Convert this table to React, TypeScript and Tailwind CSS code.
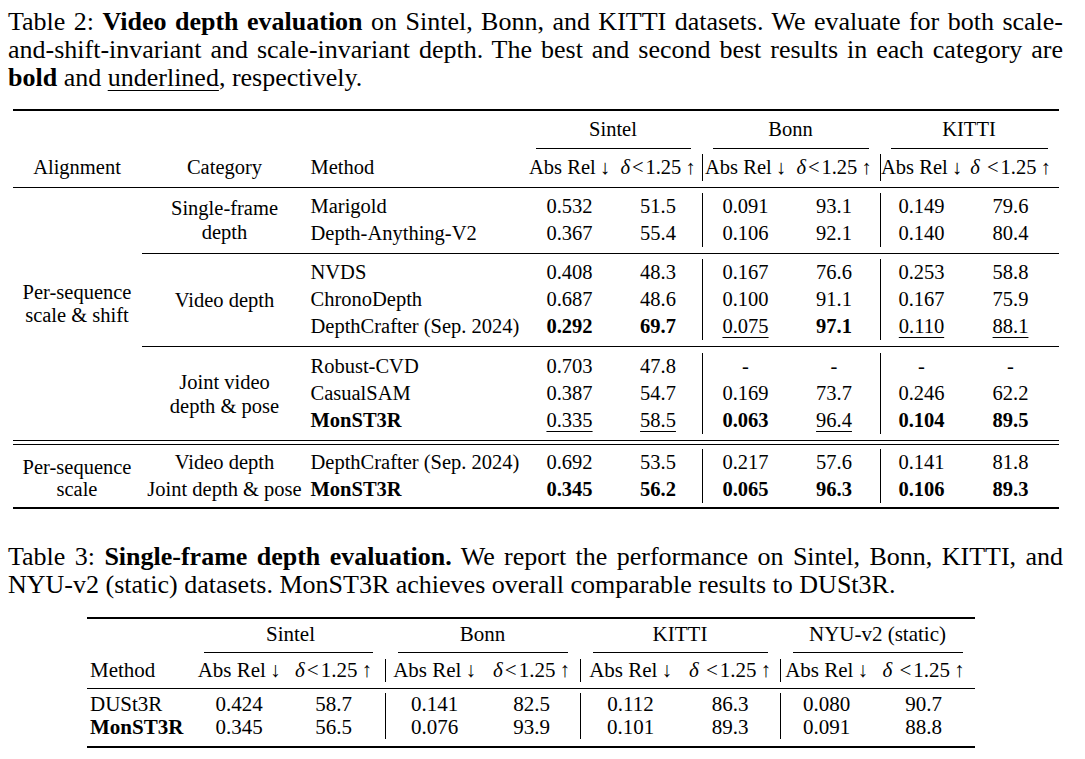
import React from "react";

const t2Rows = [
  { cat: "Single-frame|depth", span: 2, m: "Marigold", v: ["0.532", "51.5", "0.091", "93.1", "0.149", "79.6"] },
  { m: "Depth-Anything-V2", v: ["0.367", "55.4", "0.106", "92.1", "0.140", "80.4"] },
  { rule: true },
  { cat: "Video depth", span: 3, m: "NVDS", v: ["0.408", "48.3", "0.167", "76.6", "0.253", "58.8"] },
  { m: "ChronoDepth", v: ["0.687", "48.6", "0.100", "91.1", "0.167", "75.9"] },
  { m: "DepthCrafter (Sep. 2024)", v: ["*0.292", "*69.7", "_0.075", "*97.1", "_0.110", "_88.1"] },
  { rule: true },
  { cat: "Joint video|depth & pose", span: 3, m: "Robust-CVD", v: ["0.703", "47.8", "-", "-", "-", "-"] },
  { m: "CasualSAM", v: ["0.387", "54.7", "0.169", "73.7", "0.246", "62.2"] },
  { m: "*MonST3R", v: ["_0.335", "_58.5", "*0.063", "_96.4", "*0.104", "*89.5"] },
];

const t3Rows = [
  { m: "DUSt3R", v: ["0.424", "58.7", "0.141", "82.5", "0.112", "86.3", "0.080", "90.7"] },
  { m: "*MonST3R", v: ["0.345", "56.5", "0.076", "93.9", "0.101", "89.3", "0.091", "88.8"] },
];

// "*" = bold, "_" = underlined
function Txt({ s }: { s: string }) {
  if (s.startsWith("*")) return <b className="font-bold">{s.slice(1)}</b>;
  if (s.startsWith("_"))
    return <span className="underline decoration-1 underline-offset-[4px]">{s.slice(1)}</span>;
  return <>{s}</>;
}

function AbsRel() {
  return (
    <>
      Abs Rel<span className="ml-[4px]">↓</span>
    </>
  );
}

function Delta({ gap }: { gap?: boolean }) {
  return (
    <>
      <i className="italic">δ</i>
      {gap ? " " : ""}
      <span className="mx-[2px]">&lt;</span>1.25<span className="ml-[4px]">↑</span>
    </>
  );
}

function Line({ pt, pb, double, thick }: { pt: number; pb: number; double?: boolean; thick?: boolean }) {
  return (
    <div style={{ paddingTop: pt, paddingBottom: pb }}>
      {double ? (
        <div className="h-[5px] border-y border-black" />
      ) : (
        <div className={thick ? "h-[2px] bg-black" : "h-px bg-black"} />
      )}
    </div>
  );
}

function RuleRow(props: { span: number; pt: number; pb: number; double?: boolean; thick?: boolean }) {
  const { span, ...rest } = props;
  return (
    <tr>
      <td colSpan={span} className="p-0">
        <Line {...rest} />
      </td>
    </tr>
  );
}

function Table2() {
  const groups = ["Sintel", "Bonn", "KITTI"];
  return (
    <table className="mx-auto mt-[17px] w-[1046px] table-fixed border-separate border-spacing-0 text-[20.5px] leading-[27px]">
      <colgroup>
        <col className="w-[129px]" />
        <col className="w-[166px]" />
        <col className="w-[217px]" />
        <col className="w-[90px]" />
        <col className="w-[87px]" />
        <col className="w-[87px]" />
        <col className="w-[91px]" />
        <col className="w-[83px]" />
        <col className="w-[96px]" />
      </colgroup>
      <tbody>
        <RuleRow span={9} pt={0} pb={5} thick />
        <tr className="h-[27px]">
          <td colSpan={3} />
          {groups.map((g) => (
            <td key={g} colSpan={2} className="p-0 text-center whitespace-nowrap">
              {g}
            </td>
          ))}
        </tr>
        <tr>
          <td colSpan={3} />
          {groups.map((g) => (
            <td key={g} colSpan={2} className="p-0">
              <div className="mx-[11px] pt-[5px] pb-[5px]">
                <div className="h-px bg-black" />
              </div>
            </td>
          ))}
        </tr>
        <tr className="h-[27px] whitespace-nowrap">
          <td className="p-0 text-center">Alignment</td>
          <td className="p-0 text-center">Category</td>
          <td className="p-0 pl-[3px] text-left">Method</td>
          <td className="p-0 text-center"><AbsRel /></td>
          <td className="p-0 text-center"><Delta /></td>
          <td className="border-l border-black p-0 text-center"><AbsRel /></td>
          <td className="p-0 text-center"><Delta /></td>
          <td className="border-l border-black p-0 text-center"><AbsRel /></td>
          <td className="p-0 text-center"><Delta gap /></td>
        </tr>
        <RuleRow span={9} pt={6} pb={5} />
        {t2Rows.map((r, i) => {
          if ("rule" in r) {
            return (
              <tr key={i}>
                <td colSpan={8} className="p-0">
                  <Line pt={6} pb={i === 2 ? 5 : 6} />
                </td>
              </tr>
            );
          }
          return (
            <tr key={i} className="h-[27px] whitespace-nowrap">
              {i === 0 && (
                <td rowSpan={10} className="p-0 pb-[20px] text-center align-middle leading-[23px]">
                  Per-sequence
                  <br />
                  scale &amp; shift
                </td>
              )}
              {r.cat && (
                <td rowSpan={r.span} className="p-0 text-center align-middle leading-[24px]">
                  {r.cat.split("|").map((l, j) => (
                    <div key={j}>{l}</div>
                  ))}
                </td>
              )}
              <td className="p-0 pl-[3px] text-left">
                <Txt s={r.m!} />
              </td>
              {r.v!.map((v, j) => (
                <td key={j} className={j === 2 || j === 4 ? "border-l border-black p-0 text-center" : "p-0 text-center"}>
                  <Txt s={v} />
                </td>
              ))}
            </tr>
          );
        })}
        <RuleRow span={9} pt={6} pb={4} double />
        <tr className="h-[27px] whitespace-nowrap">
          <td rowSpan={2} className="p-0 pt-[4px] text-center align-middle leading-[22px]">
            Per-sequence
            <br />
            scale
          </td>
          <td className="p-0 text-center">Video depth</td>
          <td className="p-0 pl-[3px] text-left">DepthCrafter (Sep. 2024)</td>
          {["0.692", "53.5", "0.217", "57.6", "0.141", "81.8"].map((v, j) => (
            <td key={j} className={j === 2 || j === 4 ? "border-l border-black p-0 text-center" : "p-0 text-center"}>
              {v}
            </td>
          ))}
        </tr>
        <tr className="h-[27px] whitespace-nowrap">
          <td className="p-0 text-center">Joint depth &amp; pose</td>
          <td className="p-0 pl-[3px] text-left">
            <b className="font-bold">MonST3R</b>
          </td>
          {["0.345", "56.2", "0.065", "96.3", "0.106", "89.3"].map((v, j) => (
            <td key={j} className={j === 2 || j === 4 ? "border-l border-black p-0 text-center" : "p-0 text-center"}>
              <b className="font-bold">{v}</b>
            </td>
          ))}
        </tr>
        <RuleRow span={9} pt={4} pb={0} thick />
      </tbody>
    </table>
  );
}

function Table3() {
  const groups = [
    { g: "Sintel", ml: "ml-[8px]" },
    { g: "Bonn", ml: "ml-[13px]" },
    { g: "KITTI", ml: "ml-[13px]" },
    { g: "NYU-v2 (static)", ml: "ml-[13px]" },
  ];
  return (
    <table className="ml-[79px] mt-[18px] w-[888px] table-fixed border-separate border-spacing-0 text-[21px] leading-[23px]">
      <colgroup>
        <col className="w-[109px]" />
        <col className="w-[86px]" />
        <col className="w-[103px]" />
        <col className="w-[98px]" />
        <col className="w-[97px]" />
        <col className="w-[100px]" />
        <col className="w-[100px]" />
        <col className="w-[92px]" />
        <col className="w-[103px]" />
      </colgroup>
      <tbody>
        <RuleRow span={9} pt={0} pb={4} thick />
        <tr className="h-[23px]">
          <td />
          {groups.map(({ g }) => (
            <td key={g} colSpan={2} className="p-0 text-center whitespace-nowrap">
              {g}
            </td>
          ))}
        </tr>
        <tr>
          <td />
          {groups.map(({ g, ml }) => (
            <td key={g} colSpan={2} className="p-0">
              <div className={`${ml} mr-[12px] pt-[6px] pb-[6px]`}>
                <div className="h-px bg-black" />
              </div>
            </td>
          ))}
        </tr>
        <tr className="h-[23px] whitespace-nowrap">
          <td className="p-0 pl-[3px] text-left">Method</td>
          <td className="p-0 text-center"><AbsRel /></td>
          <td className="p-0 text-center"><Delta /></td>
          <td className="border-l border-black p-0 text-center"><AbsRel /></td>
          <td className="p-0 text-center"><Delta /></td>
          <td className="border-l border-black p-0 text-center"><AbsRel /></td>
          <td className="p-0 text-center"><Delta gap /></td>
          <td className="border-l border-black p-0 text-center"><AbsRel /></td>
          <td className="p-0 text-center"><Delta gap /></td>
        </tr>
        <RuleRow span={9} pt={6} pb={4} />
        {t3Rows.map((r) => (
          <tr key={r.m} className="h-[23px] whitespace-nowrap">
            <td className="p-0 pl-[3px] text-left">
              <Txt s={r.m} />
            </td>
            {r.v.map((v, j) => (
              <td key={j} className={j % 2 === 0 && j > 0 ? "border-l border-black p-0 text-center" : "p-0 text-center"}>
                {v}
              </td>
            ))}
          </tr>
        ))}
        <RuleRow span={9} pt={7} pb={0} thick />
      </tbody>
    </table>
  );
}

const just = "text-justify [text-align-last:justify]";

export default function App() {
  return (
    <div className="min-h-screen bg-white font-['Liberation_Serif','Times_New_Roman',serif] text-black">
      <div className="pl-[8px] pt-[8px]">
        <div className="w-[1055px]">
          <div className="text-[26px] leading-[28px]">
            <div className={just}>
              Table 2: <b className="font-bold">Video depth evaluation</b> on Sintel, Bonn, and KITTI datasets. We evaluate for both scale-
            </div>
            <div className={just}>
              and-shift-invariant and scale-invariant depth. The best and second best results in each category are
            </div>
            <div>
              <b className="font-bold">bold</b> and <span className="underline decoration-1 underline-offset-[4px]">underlined</span>, respectively.
            </div>
          </div>

          <Table2 />

          <div className="mt-[34px] text-[26px] leading-[28px]">
            <div className={just}>
              Table 3: <b className="font-bold">Single-frame depth evaluation.</b> We report the performance on Sintel, Bonn, KITTI, and
            </div>
            <div>NYU-v2 (static) datasets. MonST3R achieves overall comparable results to DUSt3R.</div>
          </div>

          <Table3 />
        </div>
      </div>
    </div>
  );
}
